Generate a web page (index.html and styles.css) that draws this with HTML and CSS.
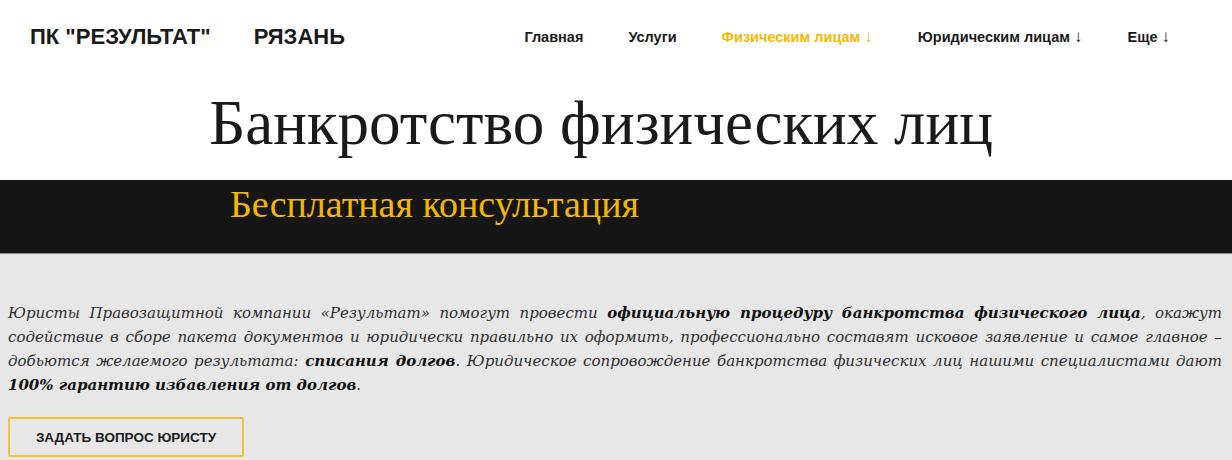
FILE: index.html
```html
<!DOCTYPE html>
<html lang="ru">
<head>
    <meta charset="UTF-8">
    <meta name="viewport" content="width=device-width, initial-scale=1.0">
    <title>Банкротство физических лиц</title>
    <link rel="stylesheet" href="styles.css">
</head>
<body>
    <header class="header">
        <div class="brand">
            <span class="logo">ПК "РЕЗУЛЬТАТ"</span>
            <span class="city">РЯЗАНЬ</span>
        </div>
        <nav class="menu">
            <a href="#">Главная</a>
            <a href="#">Услуги</a>
            <a href="#" class="active">Физическим лицам <span class="arrow">&darr;</span></a>
            <a href="#">Юридическим лицам <span class="arrow">&darr;</span></a>
            <a href="#">Еще <span class="arrow">&darr;</span></a>
        </nav>
    </header>

    <h1 class="page-title">Банкротство физических лиц</h1>

    <div class="banner">
        <h2>Бесплатная консультация</h2>
    </div>

    <section class="intro">
        <p>
            Юристы Правозащитной компании «Результат» помогут провести <b>официальную процедуру банкротства физического лица</b>, окажут содействие в сборе пакета документов и юридически правильно их оформить, профессионально составят исковое заявление и самое главное &ndash; добьются желаемого результата: <b>списания долгов</b>. Юридическое сопровождение банкротства физических лиц нашими специалистами дают <b>100% гарантию избавления от долгов</b>.
        </p>
        <button class="btn-ask">ЗАДАТЬ ВОПРОС ЮРИСТУ</button>
    </section>
</body>
</html>
```

FILE: styles.css
```css
body {
    margin: 0;
    font-family: "Liberation Sans", Arial, sans-serif;
    background-color: #fff;
    color: #1a1a1a;
}

.header {
    display: flex;
    align-items: center;
    justify-content: space-between;
    height: 74px;
    padding: 0 40px 0 30px;
}

.brand {
    display: flex;
    gap: 43px;
    font-size: 22px;
    font-weight: bold;
    color: #1a1a1a;
}

.menu {
    display: flex;
    align-items: baseline;
    gap: 45px;
    margin-right: 22px;
}

.menu a {
    font-size: 14.5px;
    font-weight: bold;
    color: #1a1a1a;
    text-decoration: none;
}

.menu a.active {
    color: #f5b800; /* yellow accent */
}

.menu .arrow {
    font-weight: normal;
    font-size: 17px;
}

.page-title {
    margin: 0;
    height: 106px;
    padding-right: 30px;
    font-family: "Liberation Serif", "Times New Roman", serif;
    font-weight: normal;
    font-size: 63px;
    line-height: 98px;
    text-align: center;
    color: #1a1a1a;
}

.banner {
    height: 73px;
    background-color: #161616;
    border-bottom: 1px solid #888;
    padding-left: 230px;
}

.banner h2 {
    margin: 0;
    padding-top: 2px;
    font-family: "Liberation Serif", "Times New Roman", serif;
    font-weight: normal;
    font-size: 38px;
    color: #f5b800;
}

.intro {
    background-color: #e7e7e7;
    padding: 47px 10px 20px 8px;
}

.intro p {
    margin: 0;
    font-family: "DejaVu Serif", "Liberation Serif", serif;
    font-style: italic;
    font-size: 15px;
    line-height: 24px;
    text-align: justify;
    color: #2e2e2e;
}

.intro p b {
    color: #111;
}

.btn-ask {
    margin-top: 20px;
    width: 236px;
    height: 40px;
    background: transparent;
    border: 2px solid #f2c23a;
    border-radius: 2px;
    font-family: "Liberation Sans", Arial, sans-serif;
    font-size: 13.5px;
    font-weight: bold;
    color: #1a1a1a;
    cursor: pointer;
}
```
